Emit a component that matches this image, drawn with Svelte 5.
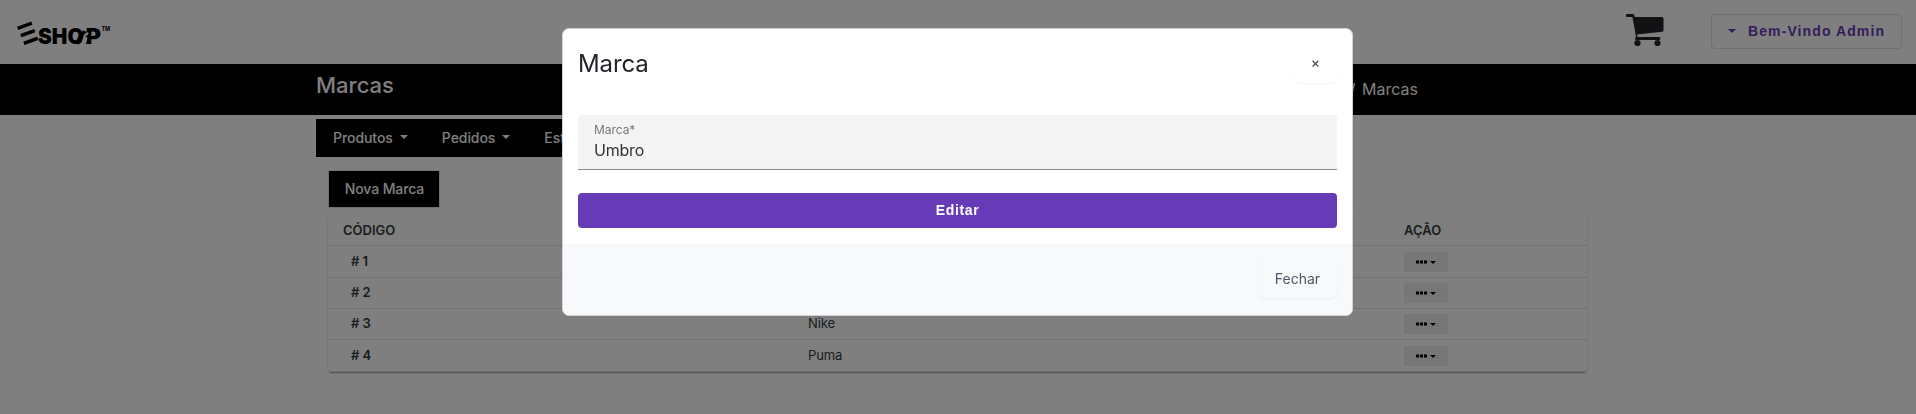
<script>
  const rows = [
    { id: 1, name: '', height: 32 },
    { id: 2, name: '', height: 31 },
    { id: 3, name: 'Nike', height: 31 },
    { id: 4, name: 'Puma', height: 32 }
  ];
  let brand = $state('Umbro');
</script>

<div class="page">
  <header class="top">
    <svg class="logo" width="104" height="34" viewBox="0 0 104 34">
      <path d="M4 10.800 18.300 5.500 19.400 8.700 5.200 14zM7.200 18 21.300 13 22.400 16.200 8.400 21.200zM10.300 25.800 24.300 20.600 25.400 24 11.500 29z" />
      <text x="25" y="28" class="word" textLength="45.500" lengthAdjust="spacingAndGlyphs">SHO</text>
      <text x="72.600" y="28" class="word" textLength="15.500" lengthAdjust="spacingAndGlyphs">P</text>
      <path class="cut" d="M67 29 71.500 18 75 16 76 19 72.500 29z" />
      <path d="M66 19 70 14.500 74 16 71 18.500 68.500 26.500 65 28.500 63 25.500zM72.500 20 76.800 17 77 28H73L74.500 22z" />
      <circle class="cut" cx="74" cy="18.500" r=".9" />
      <text x="88.500" y="14.500" class="tm" textLength="8.500">TM</text>
    </svg>
    <div class="account">
      <svg class="cart" width="38" height="33" viewBox="0 0 38 33">
        <path d="M0 .500Q0 0 1 0H6.800Q8 0 8.300 1L8.700 3H36Q37.500 3 37.500 4.500V16.500Q37.500 17.600 36.300 17.800L11 20.500 11.500 23H33Q34.500 23 34.500 24.500T33 26H10.500Q9 26 9 24.500L10 22.500 6.400 3H1Q0 3 0 2z" />
        <circle cx="11.500" cy="29" r="3.100" />
        <circle cx="31.500" cy="29" r="3.100" />
      </svg>
      <button class="welcome"><i class="caret"></i><span>Bem-Vindo Admin</span></button>
    </div>
  </header>

  <section class="titlebar">
    <h1>Marcas</h1>
    <div class="crumb"><span>/</span><span>Marcas</span></div>
  </section>

  <main>
    <nav>
      <span>Produtos<i class="caret"></i></span>
      <span>Pedidos<i class="caret"></i></span>
      <span>Est</span>
    </nav>
    <button class="new">Nova Marca</button>
    <div class="table">
      <div class="row head"><b>CÓDIGO</b><span></span><b>AÇÃO</b></div>
      {#each rows as row (row.id)}
        <div class="row" style:height="{row.height}px">
          <b class="code"># {row.id}</b>
          <span>{row.name}</span>
          <button class="more"><svg width="11" height="4" viewBox="0 0 11 4"><path d="M0 .500h3v3H0zM4 .500h3v3H4zM8 .500h3v3H8z" /></svg><i class="caret"></i></button>
        </div>
      {/each}
    </div>
  </main>
</div>

<div class="backdrop">
  <div class="modal">
    <div class="modal-head">
      <h2>Marca</h2>
      <button class="light close">×</button>
    </div>
    <div class="modal-body">
      <label class="field"><span>Marca*</span><input bind:value={brand} /></label>
      <button class="edit">Editar</button>
    </div>
    <div class="modal-foot"><button class="light">Fechar</button></div>
  </div>
</div>

<style>
  :global(body) { margin: 0; overflow: hidden; font-family: Inter, "Liberation Sans", sans-serif; color: #212529; }
  * { box-sizing: border-box; }
  button, input { font-family: inherit; margin: 0; border: 0; }
  .page { height: 414px; background: #fff; overflow: hidden; }
  .top { height: 64px; display: flex; justify-content: space-between; padding: 14px 14px 0 13px; }
  .logo { margin-top: 2px; }
  .word { font: 900 21.500px Inter, sans-serif; }
  .tm { font: 700 5.500px Inter, sans-serif; }
  .cut { fill: #fff; }
  .account { display: flex; gap: 47px; align-items: flex-start; }
  .cart { fill: #212529; }
  .caret { display: inline-block; width: 0; height: 0; border: 4px solid transparent; border-top-color: currentColor; border-bottom: 0; }
  .welcome { display: flex; align-items: center; width: 191px; height: 35px; padding: 0 0 1px 16px; gap: 12px; border: 1px solid #dfdfdf; border-radius: 4px; background: #fff; color: #673ab7; font: 700 14px "Liberation Sans", sans-serif; letter-spacing: 1.100px; white-space: nowrap; }
  .titlebar { height: 51px; background: #000; color: #fff; display: flex; justify-content: space-between; padding: 0 498px 0 316px; }
  h1 { margin: 7px 0 0; font-size: 22px; line-height: 28px; font-weight: 500; }
  .crumb { display: flex; gap: 6.500px; font-size: 16px; line-height: 51px; }
  main { padding: 4px 329px 0 316px; }
  nav { width: 500px; height: 38px; background: #000; color: #fff; display: flex; gap: 34px; align-items: center; padding: 0 17px 1px; font-size: 14px; font-weight: 500; letter-spacing: -.060px; }
  nav span { display: flex; align-items: center; gap: 7px; }
  nav .caret { margin-top: -1px; }
  .new { display: block; width: 112px; height: 38px; margin: 13px 0 8px 12px; border: 1px solid #e0e0e0; background: #000; color: #fff; font-size: 14px; font-weight: 500; letter-spacing: -.100px; padding: 0 0 2px 1px; }
  .table { margin-left: 12px; width: 1259px; border-radius: 4px; box-shadow: 0 2px 1px -1px rgba(0,0,0,.2), 0 1px 1px rgba(0,0,0,.14), 0 1px 3px rgba(0,0,0,.12); }
  .row { display: grid; grid-template-columns: 464px 597px 1fr; align-items: center; padding: 0 0 0 15px; border-bottom: 1px solid #dee2e6; font-size: 13px; color: #343a40; }
  .row > b, .row > span { padding-bottom: 2px; }
  .row b { font-weight: 600; }
  .head { height: 30px; }
  .row .code { padding-left: 8px; letter-spacing: -.100px; }
  .row > span { letter-spacing: -.100px; padding-left: 1px; }
  .more { width: 44px; height: 20px; display: flex; align-items: center; gap: 3px; padding: 0 0 0 12px; background: #efefef; color: #000; }
  .more .caret { border-width: 3px; border-bottom: 0; margin-top: 1px; }
  .backdrop { position: fixed; inset: 0; background: rgba(0,0,0,.5); display: flex; justify-content: center; align-items: flex-start; padding: 28px 1px 0 0; }
  .modal { width: 791px; height: 288px; border: 1px solid #d0d2d5; border-radius: 7px; background: #fff; overflow: hidden; }
  .modal-head { height: 86px; padding: 16px 15px 0; display: flex; justify-content: space-between; align-items: flex-start; }
  h2 { margin: 0; font-size: 24px; line-height: 38px; font-weight: 400; letter-spacing: -.100px; }
  .light { width: 79px; height: 38px; border-radius: 6px; background: transparent; color: #4f5663; font-size: 14px; padding: 0 0 1px; box-shadow: 0 1px 2px rgba(0,0,0,.06); }
  .close { width: 43px; padding-bottom: 3px; font-weight: 500; }
  .modal-body { height: 129px; padding: 0 15px; }
  .field { display: flex; flex-direction: column; height: 55px; padding: 8px 16px 0; background: #f4f4f4; border-bottom: 1px solid #8b8b8b; border-radius: 4px 4px 0 0; }
  .field span { font-size: 12px; line-height: 14px; color: #777; letter-spacing: -.050px; }
  input { padding: 0; height: 24px; margin-top: 1px; background: transparent; color: #333; font-size: 16px; letter-spacing: -.200px; }
  .edit { display: block; width: 100%; height: 35px; margin-top: 23px; border-radius: 4px; background: #673ab7; color: #fff; font: 700 14px "Liberation Sans", sans-serif; letter-spacing: .650px; padding: 0 0 1px; }
  .modal-foot { height: 71px; padding: 16px 15px; background: #f8f9fb; display: flex; justify-content: flex-end; }
</style>
